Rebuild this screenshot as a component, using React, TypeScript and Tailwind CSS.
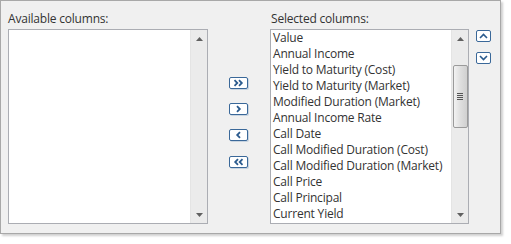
import React from 'react';

const selected = [
  'Value',
  'Annual Income',
  'Yield to Maturity (Cost)',
  'Yield to Maturity (Market)',
  'Modified Duration (Market)',
  'Annual Income Rate',
  'Call Date',
  'Call Modified Duration (Cost)',
  'Call Modified Duration (Market)',
  'Call Price',
  'Call Principal',
  'Current Yield',
];

function Chevron({ dir, double }: { dir: 'left' | 'right'; double?: boolean }) {
  const flip = dir === 'left' ? 'scale(-1,1)' : undefined;
  return (
    <svg width="11" height="8" viewBox="0 0 11 8" style={{ transform: flip }}>
      {double ? (
        <g fill="none" stroke="#2b5b8e" strokeWidth="1.8">
          <path d="M1.5 1.2 L4.3 4 L1.5 6.8" />
          <path d="M6 1.2 L8.8 4 L6 6.8" />
        </g>
      ) : (
        <path d="M4 1.2 L6.8 4 L4 6.8" fill="none" stroke="#2b5b8e" strokeWidth="1.8" />
      )}
    </svg>
  );
}

function UpDown({ dir }: { dir: 'up' | 'down' }) {
  return (
    <svg width="9" height="6" viewBox="0 0 9 6">
      <path
        d={dir === 'up' ? 'M1 5 L4.5 1.5 L8 5' : 'M1 1 L4.5 4.5 L8 1'}
        fill="none"
        stroke="#2b5b8e"
        strokeWidth="1.6"
      />
    </svg>
  );
}

function MoveButton({ dir, double }: { dir: 'left' | 'right'; double?: boolean }) {
  return (
    <button className="w-[19px] h-[12px] flex items-center justify-center rounded-[2px] border border-[#3a6899] bg-white shadow-[1px_1px_0_#c8d4e0]">
      <Chevron dir={dir} double={double} />
    </button>
  );
}

function ArrowUp() {
  return (
    <svg width="7" height="4" viewBox="0 0 7 4">
      <path d="M3.5 0 L7 4 L0 4 Z" fill="#606060" />
    </svg>
  );
}

function ArrowDown() {
  return (
    <svg width="7" height="4" viewBox="0 0 7 4">
      <path d="M0 0 L7 0 L3.5 4 Z" fill="#606060" />
    </svg>
  );
}

function Scrollbar({ thumb }: { thumb?: boolean }) {
  return (
    <div className="w-[17px] h-full bg-[#ebebeb] border-l border-[#e4e4e4] flex flex-col items-center">
      <div className="h-[17px] flex items-center justify-center">
        <ArrowUp />
      </div>
      <div className="flex-1 w-full">
        {thumb && (
          <div className="mt-[18px] mx-auto w-[15px] h-[63px] rounded-[2px] border border-[#9a9a9a] bg-gradient-to-r from-[#f2f2f2] via-[#dedede] to-[#d0d0d0] flex flex-col items-center justify-center gap-[1px]">
            <div className="w-[6px] h-[1px] bg-[#555]" />
            <div className="w-[6px] h-[1px] bg-[#555]" />
            <div className="w-[6px] h-[1px] bg-[#555]" />
            <div className="w-[6px] h-[1px] bg-[#555]" />
          </div>
        )}
      </div>
      <div className="h-[17px] flex items-center justify-center">
        <ArrowDown />
      </div>
    </div>
  );
}

export default function App() {
  return (
    <div className="w-[511px] h-[244px] bg-white" style={{ fontFamily: '"Open Sans", "Noto Sans", sans-serif' }}>
      <div className="w-[501px] h-[234px] border border-[#a8a8a8] bg-[#f0f0f0] shadow-[2px_2px_2px_#d0d0d0] flex pl-[7px] pt-[11px] text-[12px] tracking-[-0.2px] text-[#333]">
        {/* Available */}
        <div className="flex flex-col">
          <div className="h-[17px] leading-[14px]">Available columns:</div>
          <div className="w-[200px] h-[195px] border border-[#abadb3] bg-white flex justify-end">
            <Scrollbar />
          </div>
        </div>

        {/* Move buttons */}
        <div className="w-[62px] flex flex-col items-center pt-[65px] gap-[14px] pr-[1px]">
          <MoveButton dir="right" double />
          <MoveButton dir="right" />
          <div className="flex flex-col gap-[15px]">
            <MoveButton dir="left" />
            <MoveButton dir="left" double />
          </div>
        </div>

        {/* Selected */}
        <div className="flex flex-col">
          <div className="h-[17px] leading-[14px] pl-[1px]">Selected columns:</div>
          <div className="w-[199px] h-[195px] border border-[#abadb3] bg-white flex">
            <ul className="flex-1 pl-[2px] overflow-hidden">
              {selected.map((s) => (
                <li key={s} className="h-[16px] leading-[16px] whitespace-nowrap">
                  {s}
                </li>
              ))}
            </ul>
            <Scrollbar thumb />
          </div>
        </div>

        {/* Up / down */}
        <div className="flex flex-col gap-[10px] pl-[7px] pt-[18px]">
          <button className="w-[15px] h-[12px] flex items-center justify-center rounded-[2px] border border-[#3a6899] bg-white">
            <UpDown dir="up" />
          </button>
          <button className="w-[15px] h-[12px] flex items-center justify-center rounded-[2px] border border-[#3a6899] bg-white">
            <UpDown dir="down" />
          </button>
        </div>
      </div>
    </div>
  );
}
